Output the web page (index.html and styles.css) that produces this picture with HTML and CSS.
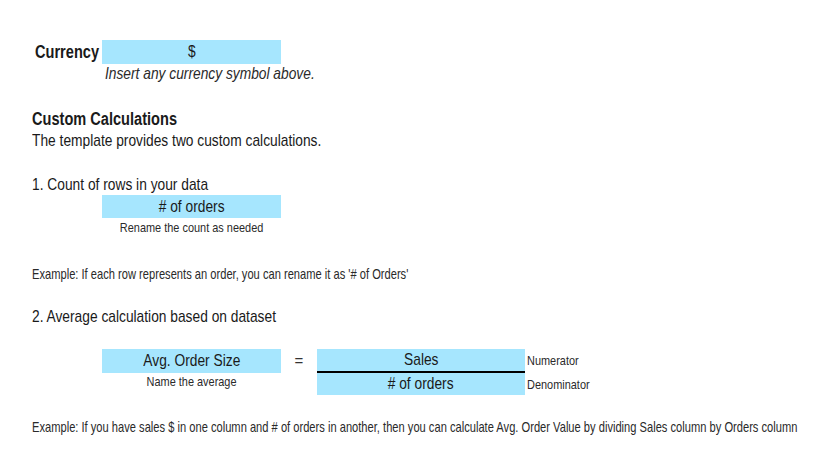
FILE: index.html
```html
<!DOCTYPE html>
<html>
<head>
<meta charset="utf-8">
<link rel="stylesheet" href="styles.css">
</head>
<body>
<div class="page">
  <div class="currency-row">
    <span class="label-bold"><span class="n">Currency</span></span>
    <div class="cell"><span class="n">$</span></div>
  </div>
  <div class="hint-italic"><span class="n">Insert any currency symbol above.</span></div>

  <div class="heading"><span class="n">Custom Calculations</span></div>
  <div class="text intro"><span class="n">The template provides two custom calculations.</span></div>

  <div class="text step1"><span class="n">1. Count of rows in your data</span></div>
  <div class="indent">
    <div class="cell count"><span class="n"># of orders</span></div>
    <div class="note"><span class="n">Rename the count as needed</span></div>
  </div>

  <div class="small example1"><span class="n">Example: If each row represents an order, you can rename it as '# of Orders'</span></div>

  <div class="text step2"><span class="n">2. Average calculation based on dataset</span></div>

  <div class="formula">
    <div class="avg-col">
      <div class="cell"><span class="n">Avg. Order Size</span></div>
      <div class="note"><span class="n">Name the average</span></div>
    </div>
    <div class="equals">=</div>
    <div class="fraction">
      <div class="frac-row">
        <div class="cell wide num"><span class="n">Sales</span></div>
        <span class="side"><span class="n">Numerator</span></span>
      </div>
      <div class="frac-row">
        <div class="cell wide den"><span class="n"># of orders</span></div>
        <span class="side"><span class="n">Denominator</span></span>
      </div>
    </div>
  </div>

  <div class="small example2"><span class="n">Example: If you have sales $ in one column and # of orders in another, then you can calculate Avg. Order Value by dividing Sales column by Orders column</span></div>
</div>
</body>
</html>
```

FILE: styles.css
```css
html, body {
  margin: 0;
  padding: 0;
  background: #ffffff;
}
body {
  font-family: "Liberation Sans", Arial, sans-serif;
  color: #1a1a1a;
}
.n {
  display: inline-block;
  white-space: nowrap;
  transform: scaleX(0.81);
  transform-origin: left center;
}
.cell .n,
.note .n {
  transform-origin: center center;
}
.page {
  padding: 40px 0 0 32px;
  width: 783px;
  height: 410px;
  overflow: hidden;
  white-space: nowrap;
}
.currency-row {
  display: flex;
  align-items: center;
  height: 24px;
}
.label-bold {
  font-weight: bold;
  font-size: 18px;
  line-height: 24px;
  width: 70px;
  padding-left: 3px;
  box-sizing: border-box;
  flex: none;
}
.cell {
  background: #a6e6fe;
  width: 179px;
  height: 24px;
  line-height: 24px;
  text-align: center;
  font-size: 17px;
  color: #1a1a1a;
  flex: none;
}
.hint-italic {
  font-style: italic;
  font-size: 17px;
  line-height: 20px;
  margin-left: 73px;
  color: #2a2a2a;
}
.heading {
  font-weight: bold;
  font-size: 18px;
  line-height: 20px;
  margin-top: 25px;
}
.text {
  font-size: 17px;
  line-height: 20px;
}
.intro {
  margin-top: 2px;
}
.step1 {
  margin-top: 24px;
}
.indent {
  margin-left: 70px;
  width: 179px;
}
.cell.count {
  height: 23px;
  line-height: 23px;
}
.note {
  font-size: 13.5px;
  line-height: 16px;
  text-align: center;
  color: #2a2a2a;
}
.indent .note {
  margin-top: 2px;
}
.avg-col .note {
  margin-top: 1px;
}
.small {
  font-size: 13.75px;
  line-height: 16px;
  color: #2a2a2a;
}
.example1 {
  margin-top: 31px;
}
.step2 {
  margin-top: 24px;
}
.formula {
  display: flex;
  margin-top: 22px;
  margin-left: 70px;
  align-items: flex-start;
}
.avg-col {
  width: 179px;
  flex: none;
}
.equals {
  width: 36px;
  flex: none;
  text-align: center;
  font-size: 15px;
  line-height: 24px;
  color: #333;
}
.fraction {
  display: flex;
  flex-direction: column;
}
.frac-row {
  display: flex;
  align-items: baseline;
}
.cell.wide {
  width: 208px;
  height: 22px;
  line-height: 22px;
}
.cell.num {
  border-bottom: 2px solid #000;
}
.side {
  font-size: 13.5px;
  line-height: 16px;
  margin-left: 2px;
  color: #2a2a2a;
}
.example2 {
  margin-top: 25px;
}
```
